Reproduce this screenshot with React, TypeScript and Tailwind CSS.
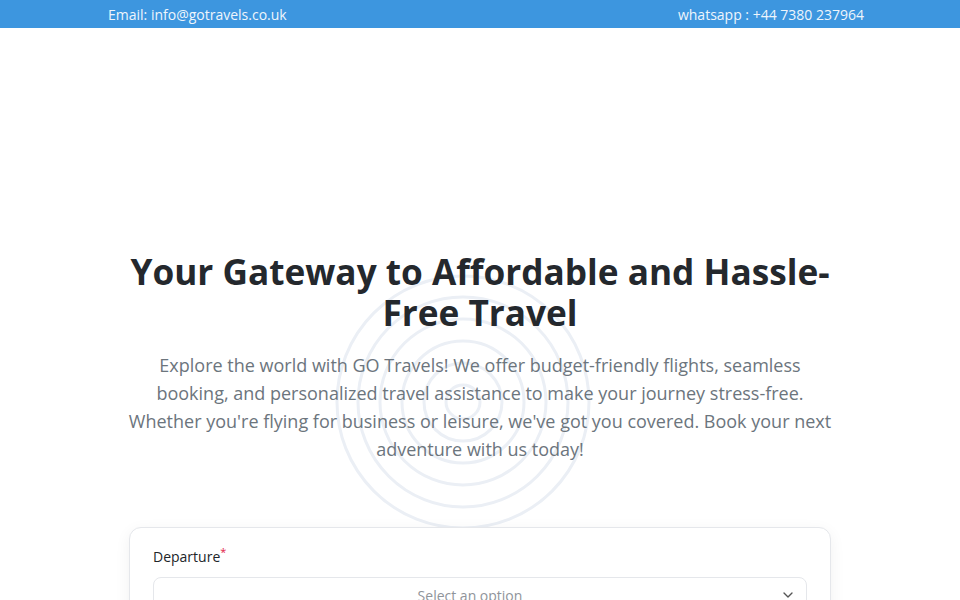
import { ChevronDown } from 'lucide-react'

const rings = [17, 39, 61, 83, 105, 126]

function Ripple() {
  return (
    <svg
      className="absolute pointer-events-none"
      style={{ left: 463 - 130, top: 402 - 130 }}
      width={260}
      height={260}
      viewBox="0 0 260 260"
    >
      {rings.map((r) => (
        <circle key={r} cx={130} cy={130} r={r} fill="none" stroke="#ebeff5" strokeWidth={3} />
      ))}
    </svg>
  )
}

export default function App() {
  return (
    <div className="relative min-h-[600px] bg-white overflow-hidden" style={{ fontFamily: "'Open Sans', 'Noto Sans', sans-serif" }}>
      {/* Top bar */}
      <div className="h-7 bg-[#3d96df] flex items-center justify-between pl-[108px] pr-[96px] text-[14px] text-[#eef5fc]">
        <span>Email: info@gotravels.co.uk</span>
        <span>whatsapp : +44 7380 237964</span>
      </div>

      <Ripple />

      {/* Hero */}
      <section className="relative max-w-[704px] mx-auto pt-[223px] text-center">
        <h1 className="-mx-3 text-[35.2px] leading-[41px] font-bold text-[#24282d]">
          Your Gateway to Affordable and Hassle-Free Travel
        </h1>
        <p className="mt-[18px] text-[18px] leading-[28px] text-[#6c757d]">
          Explore the world with GO Travels! We offer budget-friendly flights, seamless booking, and personalized travel assistance to make your journey stress-free. Whether you're flying for business or leisure, we've got you covered. Book your next adventure with us today!
        </p>

        {/* Booking card */}
        <div className="mt-[64px] ml-px mr-px border border-[#e5e7eb] rounded-xl bg-white shadow-[0_4px_16px_rgba(0,0,0,0.06)] px-[23px] pt-[18px] pb-6 text-left">
          <label className="block text-[14px] leading-[22px] text-[#212529]">
            Departure<span className="text-[#e11d48] align-top text-[11px] leading-none">*</span>
          </label>
          <div className="mt-[9px] h-9 border border-[#e5e7eb] rounded-lg flex items-center relative">
            <span className="flex-1 text-center pr-5 text-[14px] text-[#8f949a]">Select an option</span>
            <ChevronDown className="absolute right-[10px] w-4 h-4 text-[#555]" strokeWidth={2} />
          </div>
        </div>
      </section>
    </div>
  )
}
